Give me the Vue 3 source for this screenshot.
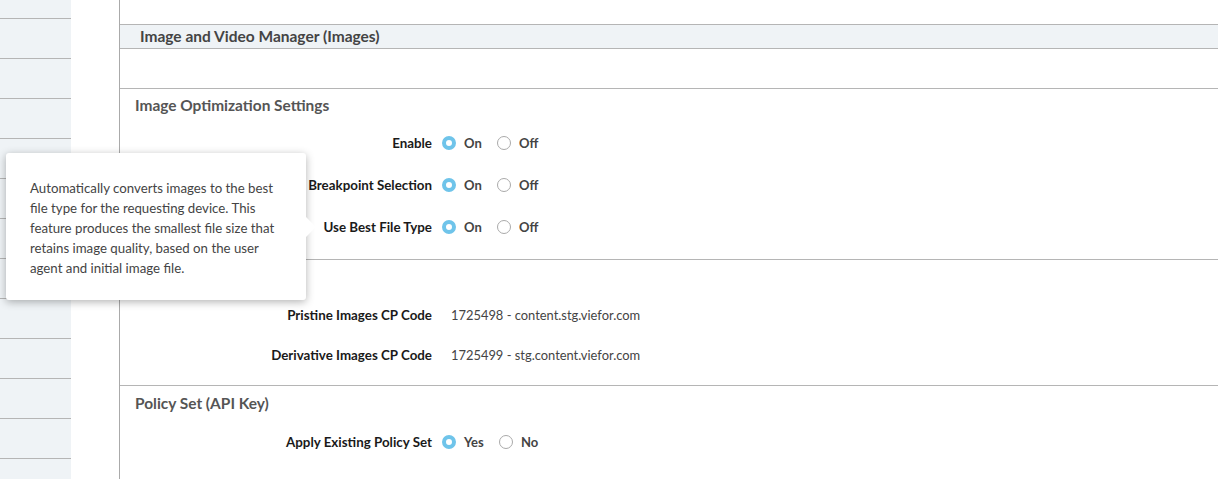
<template>
  <div class="page">
    <aside class="sidebar">
      <div v-for="n in 12" :key="n" class="side-row"></div>
    </aside>

    <main class="main">
      <div class="product-title">Image and Video Manager (Images)</div>
      <div class="spacer"></div>

      <section class="group optimize">
        <h3>Image Optimization Settings</h3>
        <div v-for="row in optimizeRows" :key="row" class="row">
          <span class="label">{{ row }}</span>
          <span class="radio on"></span><span class="opt">On</span>
          <span class="radio"></span><span class="opt">Off</span>
        </div>
      </section>

      <section class="group cpcodes">
        <div v-for="row in cpRows" :key="row.label" class="row">
          <span class="label">{{ row.label }}</span>
          <span class="value">{{ row.value }}</span>
        </div>
      </section>

      <section class="group policy">
        <h3>Policy Set (API Key)</h3>
        <div class="row">
          <span class="label">Apply Existing Policy Set</span>
          <span class="radio on"></span><span class="opt opt-yes">Yes</span>
          <span class="radio"></span><span class="opt">No</span>
        </div>
      </section>
    </main>

    <div class="tooltip">
      Automatically converts images to the best file type for the requesting device. This feature produces the smallest file size that retains image quality, based on the user agent and initial image file.
    </div>
  </div>
</template>

<script setup>
const optimizeRows = ['Enable', 'Breakpoint Selection', 'Use Best File Type']

const cpRows = [
  { label: 'Pristine Images CP Code', value: '1725498 - content.stg.viefor.com' },
  { label: 'Derivative Images CP Code', value: '1725499 - stg.content.viefor.com' }
]
</script>

<style>
html,
body {
  margin: 0;
  overflow: hidden;
}
</style>

<style scoped>
.page {
  position: relative;
  display: flex;
  height: 479px;
  overflow: hidden;
  background: #fff;
  font-family: Lato, "Noto Sans", sans-serif;
  color: #222;
}

.sidebar {
  width: 71px;
  margin-right: 48px;
  padding-top: 18px;
  background: #eff3f6;
  flex-shrink: 0;
}

.side-row {
  height: 40px;
  box-sizing: border-box;
  border-top: 1px solid #b5b5b5;
}

.main {
  flex: 1;
  border-left: 1px solid #aaa;
  padding-top: 24px;
}

.product-title {
  height: 23px;
  padding-left: 20px;
  border-top: 1px solid #b5b5b5;
  border-bottom: 1px solid #b5b5b5;
  background: #eff3f6;
  color: #444;
  font-size: 15.5px;
  font-weight: 700;
  line-height: 23px;
}

.spacer {
  height: 39px;
}

.group {
  border-top: 1px solid #b5b5b5;
  padding-left: 15px;
}

.optimize {
  height: 170px;
}

.cpcodes {
  height: 126px;
  padding-top: 45px;
  box-sizing: border-box;
}

h3 {
  margin: 0;
  color: #555;
  font-size: 15.45px;
  font-weight: 700;
  line-height: 20px;
}

.optimize h3 {
  padding-top: 6px;
  margin-bottom: 18px;
}

.policy h3 {
  padding-top: 7px;
  margin-bottom: 19px;
}

.row {
  display: flex;
  align-items: center;
  height: 20px;
  margin-bottom: 22px;
  margin-left: -15px;
}

.cpcodes .row {
  margin-bottom: 20px;
}

.label {
  width: 312px;
  text-align: right;
  color: #1a1a1a;
  font-size: 13.35px;
  font-weight: 700;
}

.value {
  margin-left: 19px;
  color: #444;
  font-size: 12.9px;
}

.radio {
  width: 14px;
  height: 14px;
  margin-left: 10px;
  box-sizing: border-box;
  border: 1px solid #aaa;
  border-radius: 50%;
  background: #fff;
}

.radio.on {
  border: 4px solid #6fc4ea;
}

.opt {
  margin-left: 8px;
  width: 23px;
  color: #444;
  font-size: 13px;
  font-weight: 700;
}

.opt-yes {
  width: 25px;
}

.tooltip {
  position: absolute;
  left: 6px;
  top: 153px;
  width: 300px;
  height: 147px;
  box-sizing: border-box;
  padding: 25px 24px;
  border-radius: 3px;
  background: #fff;
  box-shadow: 0 2px 8px rgba(0, 0, 0, 0.3);
  color: #444;
  font-size: 13.25px;
  line-height: 20px;
}

.tooltip::after {
  content: '';
  position: absolute;
  left: 293px;
  top: 67px;
  width: 14px;
  height: 14px;
  background: #fff;
  transform: rotate(45deg);
}
</style>
